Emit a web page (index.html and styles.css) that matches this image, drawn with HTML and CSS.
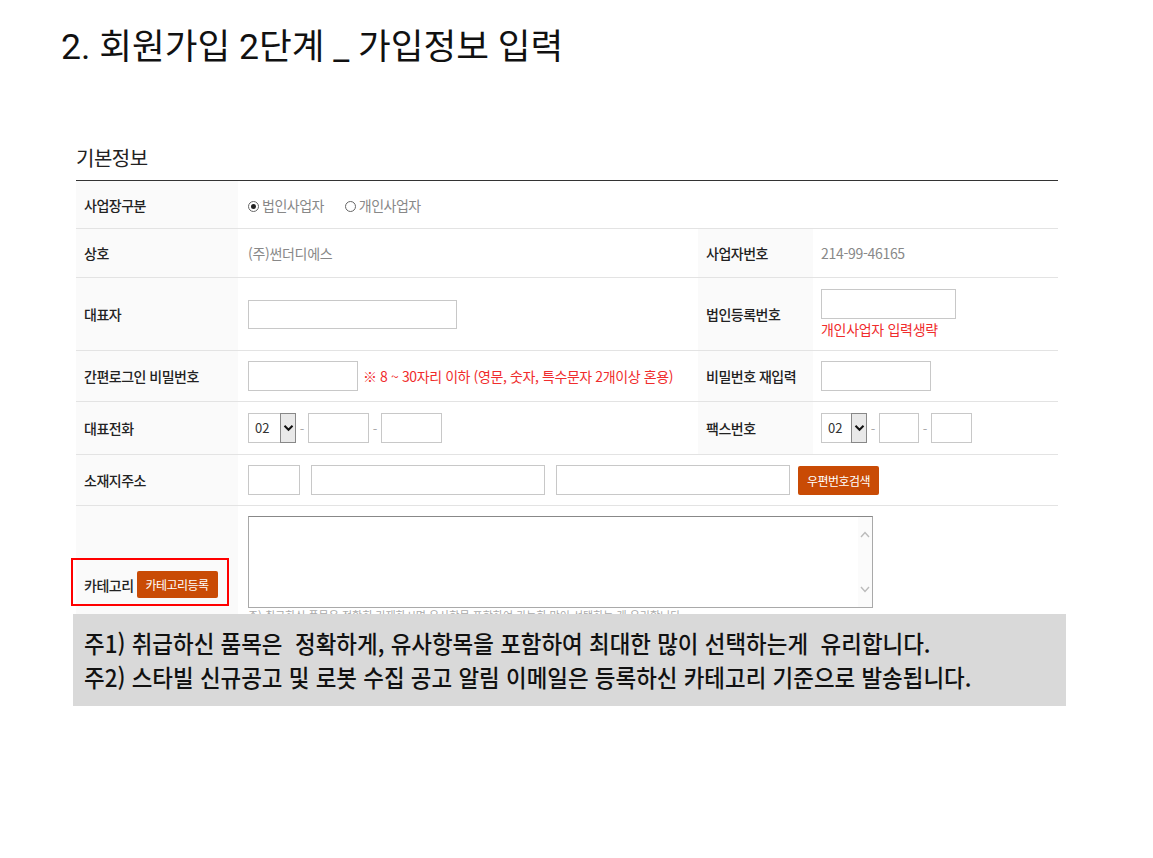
FILE: index.html
```html
<!DOCTYPE html>
<html lang="ko">
<head>
<meta charset="utf-8">
<link rel="stylesheet" href="styles.css">
</head>
<body>
<div class="page">
  <h1 class="title">2. 회원가입 2단계 _ 가입정보 입력</h1>
  <section class="form">
    <h2 class="section-title">기본정보</h2>
    <table class="grid">
      <colgroup>
        <col class="c-label"><col class="c-value"><col class="c-label2"><col class="c-value2">
      </colgroup>
      <tr class="r1">
        <th>사업장구분</th>
        <td colspan="3">
          <span class="radio on"></span><span class="rlabel">법인사업자</span>
          <span class="radio"></span><span class="rlabel">개인사업자</span>
        </td>
      </tr>
      <tr class="r2">
        <th>상호</th>
        <td class="muted">(주)썬더디에스</td>
        <th class="th2">사업자번호</th>
        <td class="muted v2">214-99-46165</td>
      </tr>
      <tr class="r3">
        <th>대표자</th>
        <td><span class="inp w209"></span></td>
        <th class="th2">법인등록번호</th>
        <td class="stack v2"><span class="inp w135 h30"></span><span class="warn">개인사업자 입력생략</span></td>
      </tr>
      <tr class="r4">
        <th>간편로그인 비밀번호</th>
        <td><span class="inp w110 h30"></span><span class="warn note">※ 8 ~ 30자리 이하 (영문, 숫자, 특수문자 2개이상 혼용)</span></td>
        <th class="th2">비밀번호 재입력</th>
        <td class="v2"><span class="inp w110 h30"></span></td>
      </tr>
      <tr class="r5">
        <th>대표전화</th>
        <td class="phone">
          <span class="sel"><span class="sel-v">02</span><span class="sel-b"><svg width="11" height="8" viewBox="0 0 11 8"><path d="M1.5 1.8 L5.5 5.8 L9.5 1.8" fill="none" stroke="#111" stroke-width="2"/></svg></span></span>
          <span class="dash">-</span><span class="inp w61 h30"></span>
          <span class="dash">-</span><span class="inp w61 h30"></span>
        </td>
        <th class="th2">팩스번호</th>
        <td class="phone v2">
          <span class="sel"><span class="sel-v sm">02</span><span class="sel-b"><svg width="11" height="8" viewBox="0 0 11 8"><path d="M1.5 1.8 L5.5 5.8 L9.5 1.8" fill="none" stroke="#111" stroke-width="2"/></svg></span></span>
          <span class="dash">-</span><span class="inp w40 h30"></span>
          <span class="dash">-</span><span class="inp w41 h30"></span>
        </td>
      </tr>
      <tr class="r6">
        <th>소재지주소</th>
        <td colspan="3" class="addr">
          <span class="inp w52 h30"></span><span class="inp w233 h30"></span><span class="inp w233 h30"></span><span class="btn">우편번호검색</span>
        </td>
      </tr>
      <tr class="r7">
        <th><span class="cat">카테고리</span><span class="btn btn-cat">카테고리등록</span></th>
        <td colspan="3" class="cat-cell">
          <div class="textarea">
            <div class="scroll">
              <svg width="10" height="7" viewBox="0 0 10 7"><path d="M1 6 L5 1.5 L9 6" fill="none" stroke="#bbb" stroke-width="1.4"/></svg>
              <svg width="10" height="7" viewBox="0 0 10 7"><path d="M1 1 L5 5.5 L9 1" fill="none" stroke="#bbb" stroke-width="1.4"/></svg>
            </div>
          </div>
          <p class="tiny">주) 취급하신 품목은 정확히 기재하시면 유사항목 포함하여 가능한 많이 선택하는 게 유리합니다.</p>
        </td>
      </tr>
    </table>
    <div class="highlight"></div>
  </section>
  <div class="notice">
    <p>주1) 취급하신 품목은&nbsp; 정확하게, 유사항목을 포함하여 최대한 많이 선택하는게&nbsp; 유리합니다.</p>
    <p>주2) 스타빌 신규공고 및 로봇 수집 공고 알림 이메일은 등록하신 카테고리 기준으로 발송됩니다.</p>
  </div>
</div>
</body>
</html>
```

FILE: styles.css
```css
* { box-sizing: border-box; }
html, body { margin: 0; padding: 0; background: #fff; }
body { font-family: "Noto Sans CJK KR", "Noto Sans", sans-serif; color: #222; }

.page { position: relative; width: 1153px; height: 858px; overflow: hidden; }

.title {
  margin: 0;
  padding: 24px 0 0 61px;
  font-family: Roboto, "Noto Sans CJK KR", sans-serif;
  font-size: 35.6px;
  line-height: 46px;
  font-weight: 400;
  color: #111;
  letter-spacing: 0;
}

.form { position: relative; margin: 74px 0 0 76px; width: 982px; }

.section-title {
  margin: 0 0 8px 0;
  font-size: 20px;
  line-height: 28px;
  font-weight: 400;
  color: #222;
  letter-spacing: -0.5px;
}

.grid {
  width: 982px;
  border-collapse: collapse;
  table-layout: fixed;
  border-top: 1px solid #333;
  font-size: 14px;
}
.c-label { width: 162px; }
.c-value { width: 460px; }
.c-label2 { width: 115px; }
.c-value2 { width: 245px; }

.grid th, .grid td {
  border-bottom: 1px solid #e3e3e3;
  padding: 0;
  vertical-align: middle;
  text-align: left;
}
.grid th {
  background: #fafafa;
  font-weight: 500;
  color: #222;
  padding-left: 8px;
  letter-spacing: -0.5px;
}
.grid td { padding-left: 10px; white-space: nowrap; }
.grid td.v2 { padding-left: 8px; }
.grid .th2 { padding-left: 8px; }

.r1 { height: 48px; }
.r2 { height: 49px; }
.r3 { height: 73px; }
.r4 { height: 51px; }
.r5 { height: 53px; }
.r6 { height: 51px; }
.r7 { height: 158px; }

.muted { color: #888; letter-spacing: -0.3px; }

.radio {
  display: inline-block;
  width: 11px; height: 11px;
  border: 1px solid #666;
  border-radius: 50%;
  vertical-align: -1px;
  margin-right: 3px;
  position: relative;
}
.radio.on::after {
  content: "";
  position: absolute;
  left: 2px; top: 2px;
  width: 5px; height: 5px;
  border-radius: 50%;
  background: #222;
}
.rlabel { color: #888; margin-right: 17px; letter-spacing: -0.5px; }

.inp {
  display: inline-block;
  vertical-align: middle;
  height: 29px;
  border: 1px solid #c8c8c8;
  background: #fff;
}
.h30 { height: 30px; }
.w209 { width: 209px; }
.w135 { width: 135px; }
.w110 { width: 110px; }
.w61 { width: 61px; }
.w40 { width: 40px; }
.w41 { width: 41px; }
.w52 { width: 52px; }
.w233 { width: 234px; }

.stack { padding-top: 2px; }
.stack .inp { display: block; }
.warn { color: #f02c2c; letter-spacing: -0.3px; }
.stack .warn { display: block; line-height: 20px; }
.note { margin-left: 5px; vertical-align: middle; letter-spacing: -0.4px; }

.phone { font-size: 0; }
.sel {
  display: inline-flex;
  vertical-align: middle;
  height: 30px;
  border: 1px solid #c8c8c8;
  background: #fff;
}
.sel-v {
  width: 31px;
  font-size: 13px;
  line-height: 28px;
  padding-left: 6px;
  color: #333;
}
.sel-v.sm { width: 29px; }
.sel-b {
  width: 16px;
  height: 30px;
  margin: -1px -1px 0 0;
  border: 1px solid #888;
  background: #e9e9e9;
  display: flex;
  align-items: center;
  justify-content: center;
}
.dash {
  display: inline-block;
  vertical-align: middle;
  font-size: 13px;
  color: #aaa;
  width: 12px;
  text-align: center;
}

.addr { font-size: 0; }
.addr .inp { margin-right: 11px; }
.addr .inp:nth-child(3) { margin-right: 8px; }

.btn {
  display: inline-block;
  vertical-align: middle;
  background: #c94b05;
  color: #fff;
  font-size: 12px;
  line-height: 29px;
  height: 29px;
  padding: 0 10px;
  border-radius: 2px;
  letter-spacing: -0.5px;
  font-weight: 400;
}
.addr .btn { width: 81px; text-align: center; padding: 0; }

.cat { font-size: 14px; vertical-align: middle; margin-right: 3px; }
.btn-cat { width: 81px; height: 27px; line-height: 27px; padding: 0; text-align: center; }

.cat-cell { vertical-align: top !important; padding-top: 10px !important; }
.textarea {
  width: 625px;
  height: 92px;
  border: 1px solid #a9a9a9;
  border-top-color: #888;
  background: #fff;
  display: flex;
  justify-content: flex-end;
}
.scroll {
  width: 14px;
  height: 100%;
  background: #fbfbfb;
  display: flex;
  flex-direction: column;
  align-items: center;
  justify-content: space-between;
  padding: 14px 0 14px;
}
.tiny { margin: 0; font-size: 11px; line-height: 14px; color: #aaa; }

.highlight {
  position: absolute;
  left: -5px;
  top: 414px;
  width: 158px;
  height: 48px;
  border: 2px solid #f00;
}

.notice {
  position: absolute;
  left: 73px;
  top: 614px;
  width: 993px;
  height: 92px;
  background: #d9d9d9;
  padding: 12px 0 0 11px;
}
.notice p {
  margin: 0;
  font-size: 24px;
  line-height: 34px;
  font-weight: 500;
  color: #111;
  letter-spacing: 0;
  white-space: nowrap;
  transform: scaleX(0.935);
  transform-origin: left center;
}
```
